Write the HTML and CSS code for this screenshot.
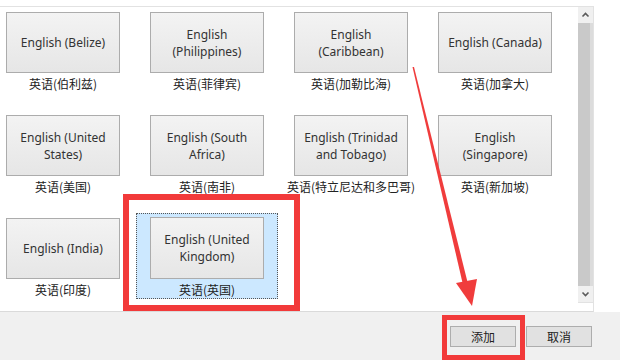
FILE: index.html
```html
<!DOCTYPE html>
<html>
	<head>
		<meta charset="utf-8"/>
		<title>添加语言</title>
		<link rel="stylesheet" href="styles.css">
	</head>
	<body>
		<div class="list">
			<div class="items">
				<div class="item"><div class="tile">English (Belize)</div><div class="label">英语(伯利兹)</div></div>
				<div class="item"><div class="tile">English<br>(Philippines)</div><div class="label">英语(菲律宾)</div></div>
				<div class="item"><div class="tile">English<br>(Caribbean)</div><div class="label">英语(加勒比海)</div></div>
				<div class="item"><div class="tile">English (Canada)</div><div class="label">英语(加拿大)</div></div>

				<div class="item"><div class="tile">English (United<br>States)</div><div class="label">英语(美国)</div></div>
				<div class="item"><div class="tile">English (South<br>Africa)</div><div class="label">英语(南非)</div></div>
				<div class="item"><div class="tile">English (Trinidad<br>and Tobago)</div><div class="label">英语(特立尼达和多巴哥)</div></div>
				<div class="item"><div class="tile">English<br>(Singapore)</div><div class="label">英语(新加坡)</div></div>

				<div class="item"><div class="tile">English (India)</div><div class="label">英语(印度)</div></div>
				<div class="item selected"><div class="tile">English (United<br>Kingdom)</div><div class="label">英语(英国)</div></div>
			</div>
			<div class="scrollbar">
				<div class="scroll-btn">
					<svg width="15" height="16" viewBox="0 0 15 16"><polyline points="4.5,9.5 7.5,6.5 10.5,9.5" fill="none" stroke="#5a5a5a" stroke-width="1.6"/></svg>
				</div>
				<div class="scroll-track"></div>
				<div class="scroll-btn">
					<svg width="15" height="16" viewBox="0 0 15 16"><polyline points="4.5,6.5 7.5,9.5 10.5,6.5" fill="none" stroke="#5a5a5a" stroke-width="1.6"/></svg>
				</div>
			</div>
		</div>

		<div class="footer">
			<button class="btn">添加</button>
			<button class="btn">取消</button>
		</div>

		<!-- annotations drawn over the screenshot -->
		<div class="mark mark-item"></div>
		<div class="mark mark-add"></div>
		<svg class="arrow" width="620" height="360" viewBox="0 0 620 360">
			<polygon points="412.5,67 414,67 468.5,286 463.5,287" fill="#f03c3c"/>
			<polygon points="456,283 477,279 472,306" fill="#f03c3c"/>
		</svg>
	</body>
</html>
```

FILE: styles.css
```css
body {
	margin: 0;
	width: 620px;
	height: 360px;
	overflow: hidden;
	position: relative;
	background: #fff;
	font-family: "Noto Sans", "Noto Sans CJK SC", sans-serif;
	font-size: 12px;
	color: #222;
}
.list {
	display: flex;
	box-sizing: border-box;
	width: 594px;
	height: 306px;
	margin-top: 6px;
	border-top: 1px solid #e2e2e2;
	border-right: 1px solid #e2e2e2;
	border-bottom: 1px solid #dadada;
}
.items {
	flex: 1;
	overflow: hidden;
	display: grid;
	grid-template-columns: repeat(4, 142px);
	grid-auto-rows: 86px;
	column-gap: 2px;
	row-gap: 17px;
	margin-left: -8px;
	align-content: start;
}
.item {
	box-sizing: border-box;
	padding-top: 4px;
	display: flex;
	flex-direction: column;
	align-items: center;
	border: 1px solid transparent;
}
.item.selected {
	background: #cce8ff;
	border: 1px dotted #555;
	padding-top: 3px;
}
.tile {
	box-sizing: border-box;
	width: 114px;
	height: 63px;
	display: flex;
	align-items: center;
	justify-content: center;
	text-align: center;
	line-height: 17px;
	color: #333;
	background: linear-gradient(#f3f3f3, #e6e6e6);
	border: 1px solid #acacac;
}
.label {
	margin-top: 3px;
	line-height: 16px;
	font-family: "Noto Sans CJK SC", sans-serif;
	color: #222;
	white-space: nowrap;
}
.scrollbar {
	width: 15px;
	height: 295px;
	display: flex;
	flex-direction: column;
	background: #f0f0f0;
	border-bottom: 1px solid #e2e2e2;
}
.scroll-btn {
	height: 16px;
	background: #f0f0f0;
}
.scroll-btn svg {
	display: block;
}
.scroll-track {
	flex: 1;
	background: linear-gradient(90deg, #c9c9c9 0, #c9c9c9 80%, #dcdcdc 80%);
}
.footer {
	display: flex;
	justify-content: flex-end;
	gap: 10px;
	height: 48px;
	padding: 14px 28px 0 0;
	box-sizing: border-box;
	background: #f0f0f0;
}
.btn {
	width: 66px;
	height: 21px;
	padding: 0;
	font-family: "Noto Sans CJK SC", sans-serif;
	font-size: 12px;
	color: #222;
	background: #e1e1e1;
	border: 1px solid #adadad;
	border-radius: 0;
}
.mark {
	position: absolute;
	box-sizing: border-box;
	border: 6px solid #f23a3a;
}
.mark-item {
	left: 123px;
	top: 194px;
	width: 177px;
	height: 117px;
}
.mark-add {
	left: 442px;
	top: 315px;
	width: 83px;
	height: 45px;
	border-width: 5px;
}
.arrow {
	position: absolute;
	left: 0;
	top: 0;
}
```
